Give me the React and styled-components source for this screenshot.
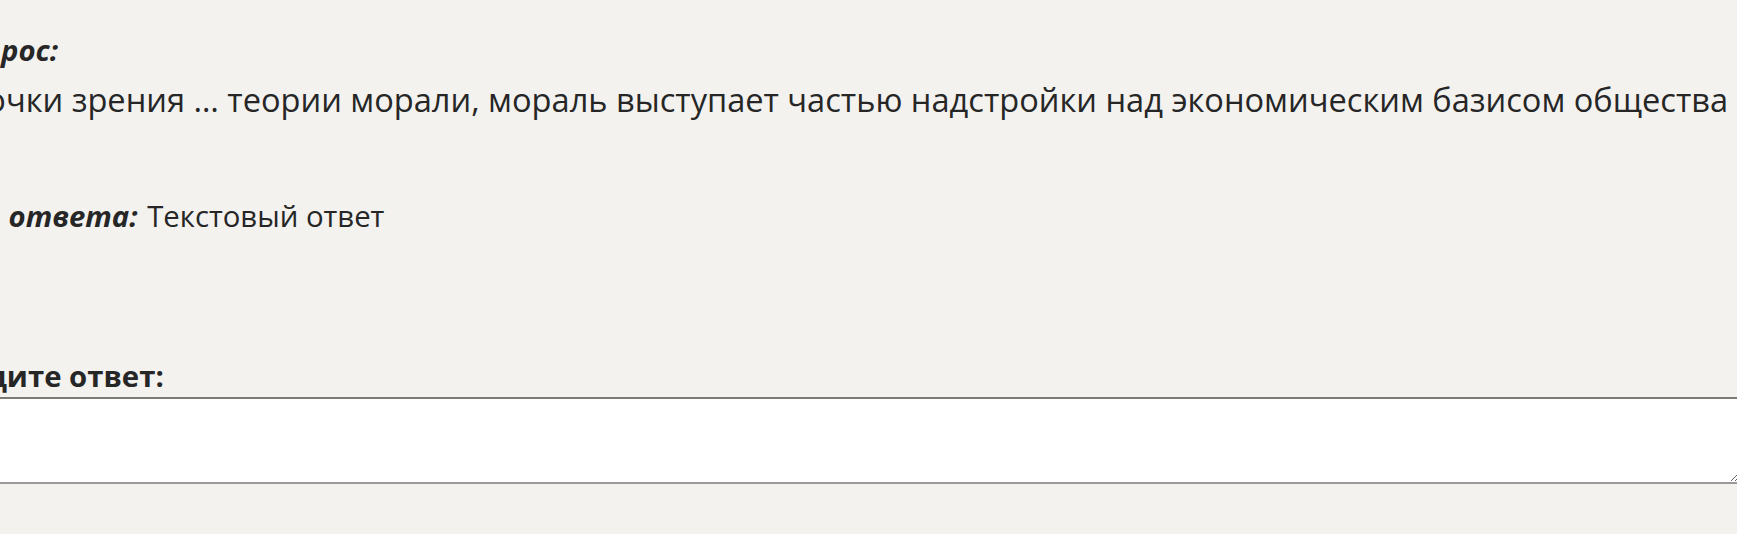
import React from 'react';
import styled, { createGlobalStyle } from 'styled-components';

const GlobalStyle = createGlobalStyle`
    html, body {
        margin: 0;
        padding: 0;
        background: #f3f2ef;
        overflow: hidden;
    }
`;

const App = () => {
    return (
        <>
        <GlobalStyle />
        <Page>
            <Label>Вопрос:</Label>
            <Question>С точки зрения … теории морали, мораль выступает частью надстройки над экономическим базисом общества</Question>
            <TypeLine><Em>Тип ответа:</Em> Текстовый ответ</TypeLine>
            <AnswerLabel>Введите ответ:</AnswerLabel>
            <AnswerBox />
        </Page>
        </>
    );
};

export default App;

const Page = styled.div`
    margin-left: -58px;
    width: calc(100vw + 60px);
    padding-top: 25px;
    font-family: "Open Sans", "Noto Sans", sans-serif;
    font-size: 32.6px;
    color: #262626;
    white-space: nowrap;
`

const Label = styled.div`
    margin-left: 6px;
    font-size: 29.3px;
    font-weight: bold;
    font-style: italic;
    line-height: 50px;
`

const Question = styled.div`
    line-height: 50px;
`

const TypeLine = styled.div`
    margin-top: 66px;
    margin-left: 8px;
    font-size: 29.3px;
    line-height: 50px;
`

const Em = styled.span`
    font-weight: bold;
    font-style: italic;
    margin-right: 2px;
`

const AnswerLabel = styled.div`
    margin-top: 115px;
    margin-left: -10px;
    font-size: 29.3px;
    font-weight: bold;
    line-height: 41px;
`

const AnswerBox = styled.textarea`
    display: block;
    box-sizing: border-box;
    width: 100%;
    height: 87px;
    margin: 0;
    background: #fff;
    border: none;
    border-top: 2px solid #7b7b76;
    border-bottom: 2px solid #9a9a98;
    font-family: inherit;
    font-size: 20px;
`
